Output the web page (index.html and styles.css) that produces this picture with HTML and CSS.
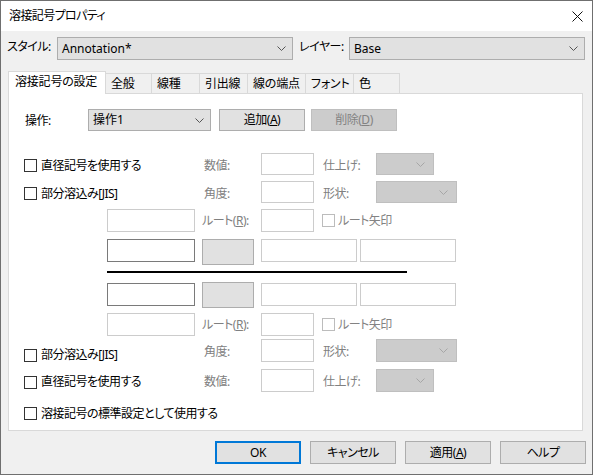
FILE: index.html
```html
<!DOCTYPE html>
<html lang="ja">
<head>
<meta charset="utf-8">
<title>溶接記号プロパティ</title>
<link rel="stylesheet" href="styles.css">
</head>
<body>
<div class="window">
  <div class="titlebar">
    <span class="title">溶接記号プロパティ</span>
    <svg class="close" width="11" height="11" viewBox="0 0 11 11"><path d="M0.5 0.5L10.5 10.5M10.5 0.5L0.5 10.5" stroke="#111" stroke-width="1" fill="none"/></svg>
  </div>
  <div class="client">
    <div class="toprow">
      <span class="toplbl">スタイル:</span>
      <div class="combo wide"><span class="ctext">Annotation*</span><svg class="chev" width="9" height="5" viewBox="0 0 9 5"><polyline points="0.5,0.5 4.5,4.5 8.5,0.5" fill="none" stroke="#555" stroke-width="1"/></svg></div>
      <span class="toplbl layer">レイヤー:</span>
      <div class="combo wide"><span class="ctext">Base</span><svg class="chev" width="9" height="5" viewBox="0 0 9 5"><polyline points="0.5,0.5 4.5,4.5 8.5,0.5" fill="none" stroke="#555" stroke-width="1"/></svg></div>
    </div>

    <div class="tabs">
      <div class="tab active">溶接記号の設定</div>
      <div class="tab t1">全般</div>
      <div class="tab t2">線種</div>
      <div class="tab t3">引出線</div>
      <div class="tab t4">線の端点</div>
      <div class="tab t5">フォント</div>
      <div class="tab t6">色</div>
    </div>

    <div class="panel">
      <div class="row oprow">
        <span class="oplbl">操作:</span>
        <div class="combo opcombo"><span class="ctext">操作1</span><svg class="chev" width="9" height="5" viewBox="0 0 9 5"><polyline points="0.5,0.5 4.5,4.5 8.5,0.5" fill="none" stroke="#555" stroke-width="1"/></svg></div>
        <div class="btn add">追加(<u>A</u>)</div>
        <div class="btn disabled del">削除(<u>D</u>)</div>
      </div>

      <div class="row rowA">
        <label class="chk"><span class="box"></span><span>直径記号を使用する</span></label>
        <span class="dlbl w57">数値:</span>
        <div class="inp dis w53"></div>
        <span class="dlbl w53 ml9">仕上げ:</span>
        <div class="combo dis w58"><svg class="chev" width="9" height="5" viewBox="0 0 9 5"><polyline points="0.5,0.5 4.5,4.5 8.5,0.5" fill="none" stroke="#a6a6a6" stroke-width="1"/></svg></div>
      </div>

      <div class="row rowB">
        <label class="chk"><span class="box"></span><span>部分溶込み[JIS]</span></label>
        <span class="dlbl w57">角度:</span>
        <div class="inp dis w53"></div>
        <span class="dlbl w53 ml9">形状:</span>
        <div class="combo dis w81"><svg class="chev" width="9" height="5" viewBox="0 0 9 5"><polyline points="0.5,0.5 4.5,4.5 8.5,0.5" fill="none" stroke="#a6a6a6" stroke-width="1"/></svg></div>
      </div>

      <div class="row rowC">
        <div class="inp dis w88"></div>
        <span class="dlbl rlbl">ルート(<u>R</u>):</span>
        <div class="inp dis w53"></div>
        <label class="chk small"><span class="box dis"></span><span class="dtext">ルート矢印</span></label>
      </div>

      <div class="row sym top">
        <div class="inp dark w88"></div>
        <div class="gbox"></div>
        <div class="inp dis w96 ml7"></div>
        <div class="inp dis w96 ml3"></div>
      </div>

      <div class="refline"></div>

      <div class="row sym bottom">
        <div class="inp dark w88"></div>
        <div class="gbox"></div>
        <div class="inp dis w96 ml7"></div>
        <div class="inp dis w96 ml3"></div>
      </div>

      <div class="row rowF">
        <div class="inp dis w88"></div>
        <span class="dlbl rlbl">ルート(<u>R</u>):</span>
        <div class="inp dis w53"></div>
        <label class="chk small"><span class="box dis"></span><span class="dtext">ルート矢印</span></label>
      </div>

      <div class="row rowG">
        <label class="chk low"><span class="box"></span><span>部分溶込み[JIS]</span></label>
        <span class="dlbl w57 low">角度:</span>
        <div class="inp dis w53"></div>
        <span class="dlbl w53 ml9 low">形状:</span>
        <div class="combo dis w81"><svg class="chev" width="9" height="5" viewBox="0 0 9 5"><polyline points="0.5,0.5 4.5,4.5 8.5,0.5" fill="none" stroke="#a6a6a6" stroke-width="1"/></svg></div>
      </div>

      <div class="row rowH">
        <label class="chk"><span class="box"></span><span>直径記号を使用する</span></label>
        <span class="dlbl w57">数値:</span>
        <div class="inp dis w53"></div>
        <span class="dlbl w53 ml9">仕上げ:</span>
        <div class="combo dis w58"><svg class="chev" width="9" height="5" viewBox="0 0 9 5"><polyline points="0.5,0.5 4.5,4.5 8.5,0.5" fill="none" stroke="#a6a6a6" stroke-width="1"/></svg></div>
      </div>

      <div class="row rowI">
        <label class="chk"><span class="box"></span><span>溶接記号の標準設定として使用する</span></label>
      </div>
    </div>

    <div class="buttons">
      <div class="btn dlg default">OK</div>
      <div class="btn dlg">キャンセル</div>
      <div class="btn dlg">適用(<u>A</u>)</div>
      <div class="btn dlg">ヘルプ</div>
    </div>
  </div>
</div>
</body>
</html>
```

FILE: styles.css
```css
* { box-sizing: border-box; }
html, body { margin: 0; padding: 0; background: #ffffff; }
body {
  font-family: "Noto Sans", "Noto Sans CJK JP", sans-serif;
  font-size: 12px;
  line-height: 16px;
  color: #000;
  font-feature-settings: "palt" 1;
  letter-spacing: -0.5px;
}
u { text-decoration: underline; text-underline-offset: 1px; }
span, label, .tab, .btn { white-space: nowrap; }

.window {
  width: 593px;
  height: 475px;
  border: 1px solid #6f6f6f;
  display: flex;
  flex-direction: column;
  background: #f0f0f0;
}

.titlebar {
  height: 30px;
  background: #ffffff;
  display: flex;
  align-items: center;
  justify-content: space-between;
  padding: 0 9px 0 8px;
  flex: none;
}
.title { font-size: 12px; letter-spacing: -0.6px; }
.close { display: block; }

.client {
  flex: 1;
  display: flex;
  flex-direction: column;
}

.toprow {
  margin-top: 6px;
  height: 23px;
  display: flex;
  align-items: center;
  padding-left: 6px;
}
.toplbl { width: 50px; margin-top: -3px; }
.toplbl.layer { margin-left: 6px; }

.combo {
  height: 23px;
  background: #e1e1e1;
  border: 1px solid #adadad;
  display: flex;
  align-items: center;
  justify-content: space-between;
  padding: 0 6px 0 4px;
  letter-spacing: 0;
}
.combo .chev { margin-left: auto; display: block; }
.combo.wide { width: 236px; }
.combo.dis { background: #cccccc; border-color: #bfbfbf; height: 22px; padding-right: 8px; }

.tabs {
  margin-top: 11px;
  height: 22px;
  padding-left: 7px;
  display: flex;
  align-items: flex-end;
  position: relative;
  z-index: 2;
}
.tab {
  height: 20px;
  border-top: 1px solid #d9d9d9;
  border-right: 1px solid #d9d9d9;
  background: #f0f0f0;
  padding: 2px 0 0 5px;
  overflow: hidden;
  letter-spacing: -0.2px;
}
.tab.active {
  height: 23px;
  margin-bottom: -1px;
  width: 98px;
  border: 1px solid #d9d9d9;
  border-bottom: none;
  background: #ffffff;
  padding: 2px 0 0 6px;
}
.t1 { width: 46px; }
.t2 { width: 48px; }
.t3 { width: 48px; }
.t4 { width: 58px; }
.t5 { width: 48px; }
.t6 { width: 46px; }

.panel {
  margin-left: 7px;
  width: 575px;
  height: 338px;
  border: 1px solid #d9d9d9;
  background: #ffffff;
  padding-left: 15px;
  position: relative;
  z-index: 1;
}

.row { display: flex; align-items: center; }

.oprow { margin-top: 15px; height: 22px; }
.oplbl { width: 64px; padding-left: 1px; margin-top: 2px; }
.opcombo { width: 123px; height: 22px; }

.btn {
  height: 22px;
  width: 86px;
  background: #e1e1e1;
  border: 1px solid #adadad;
  display: flex;
  align-items: center;
  justify-content: center;
}
.btn.add { margin-left: 8px; }
.btn.del { margin-left: 6px; }
.btn.disabled { background: #cccccc; border-color: #bfbfbf; color: #838383; }

.chk { display: flex; align-items: center; width: 180px; margin-top: 3px; }
.chk .box {
  width: 13px;
  height: 13px;
  border: 1px solid #333333;
  background: #ffffff;
  margin-right: 4px;
  flex: none;
}
.chk .box.dis { border-color: #bcbcbc; }
.chk.small { width: auto; margin-left: 8px; margin-top: 0; }
.chk.small .box { margin-right: 3px; }
.chk.low { margin-top: 9px; }
.dtext { color: #838383; }

.dlbl { color: #808080; margin-top: 3px; }
.w57 { width: 57px; }
.w53 { width: 53px; }
.w58 { width: 58px; }
.w81 { width: 81px; }
.w88 { width: 88px; }
.w96 { width: 96px; }
.ml9 { margin-left: 9px; }
.ml7 { margin-left: 7px; }
.ml3 { margin-left: 3px; }

.inp { height: 22px; background: #ffffff; border: 1px solid #cccccc; }
.inp.dark { border-color: #7a7a7a; }

.rowA { margin-top: 22px; height: 22px; }
.rowB { margin-top: 6px; height: 22px; }
.rowC { margin-top: 6px; height: 23px; padding-left: 83px; }
.rowC .inp, .rowF .inp { height: 23px; }
.rlbl { width: 59px; margin-left: 7px; margin-top: 1px; }

.sym { height: 26px; align-items: flex-start; padding-left: 83px; }
.sym .inp { height: 23px; }
.sym.top { margin-top: 7px; }
.sym.bottom { margin-top: 9px; }
.sym.bottom .inp { margin-top: 1px; }
.gbox {
  width: 52px;
  height: 26px;
  margin-left: 7px;
  background: #e1e1e1;
  border: 1px solid #adadad;
}

.refline {
  margin-top: 6px;
  margin-left: 83px;
  width: 300px;
  height: 2px;
  background: #000000;
}

.rowF { margin-top: 5px; height: 23px; padding-left: 83px; }
.rowG { margin-top: 3px; height: 23px; }
.rowG .inp, .rowH .inp { height: 23px; }
.rowG .combo.dis, .rowH .combo.dis { height: 23px; }
.rowH { margin-top: 7px; height: 23px; }
.rowI { margin-top: 15px; height: 13px; }
.rowI .chk { width: auto; margin-top: 0; }

.buttons {
  margin-top: 10px;
  display: flex;
  justify-content: flex-end;
  gap: 9px;
  padding-right: 6px;
}
.btn.dlg { height: 23px; }
.btn.default { border: 2px solid #0078d7; }
```
